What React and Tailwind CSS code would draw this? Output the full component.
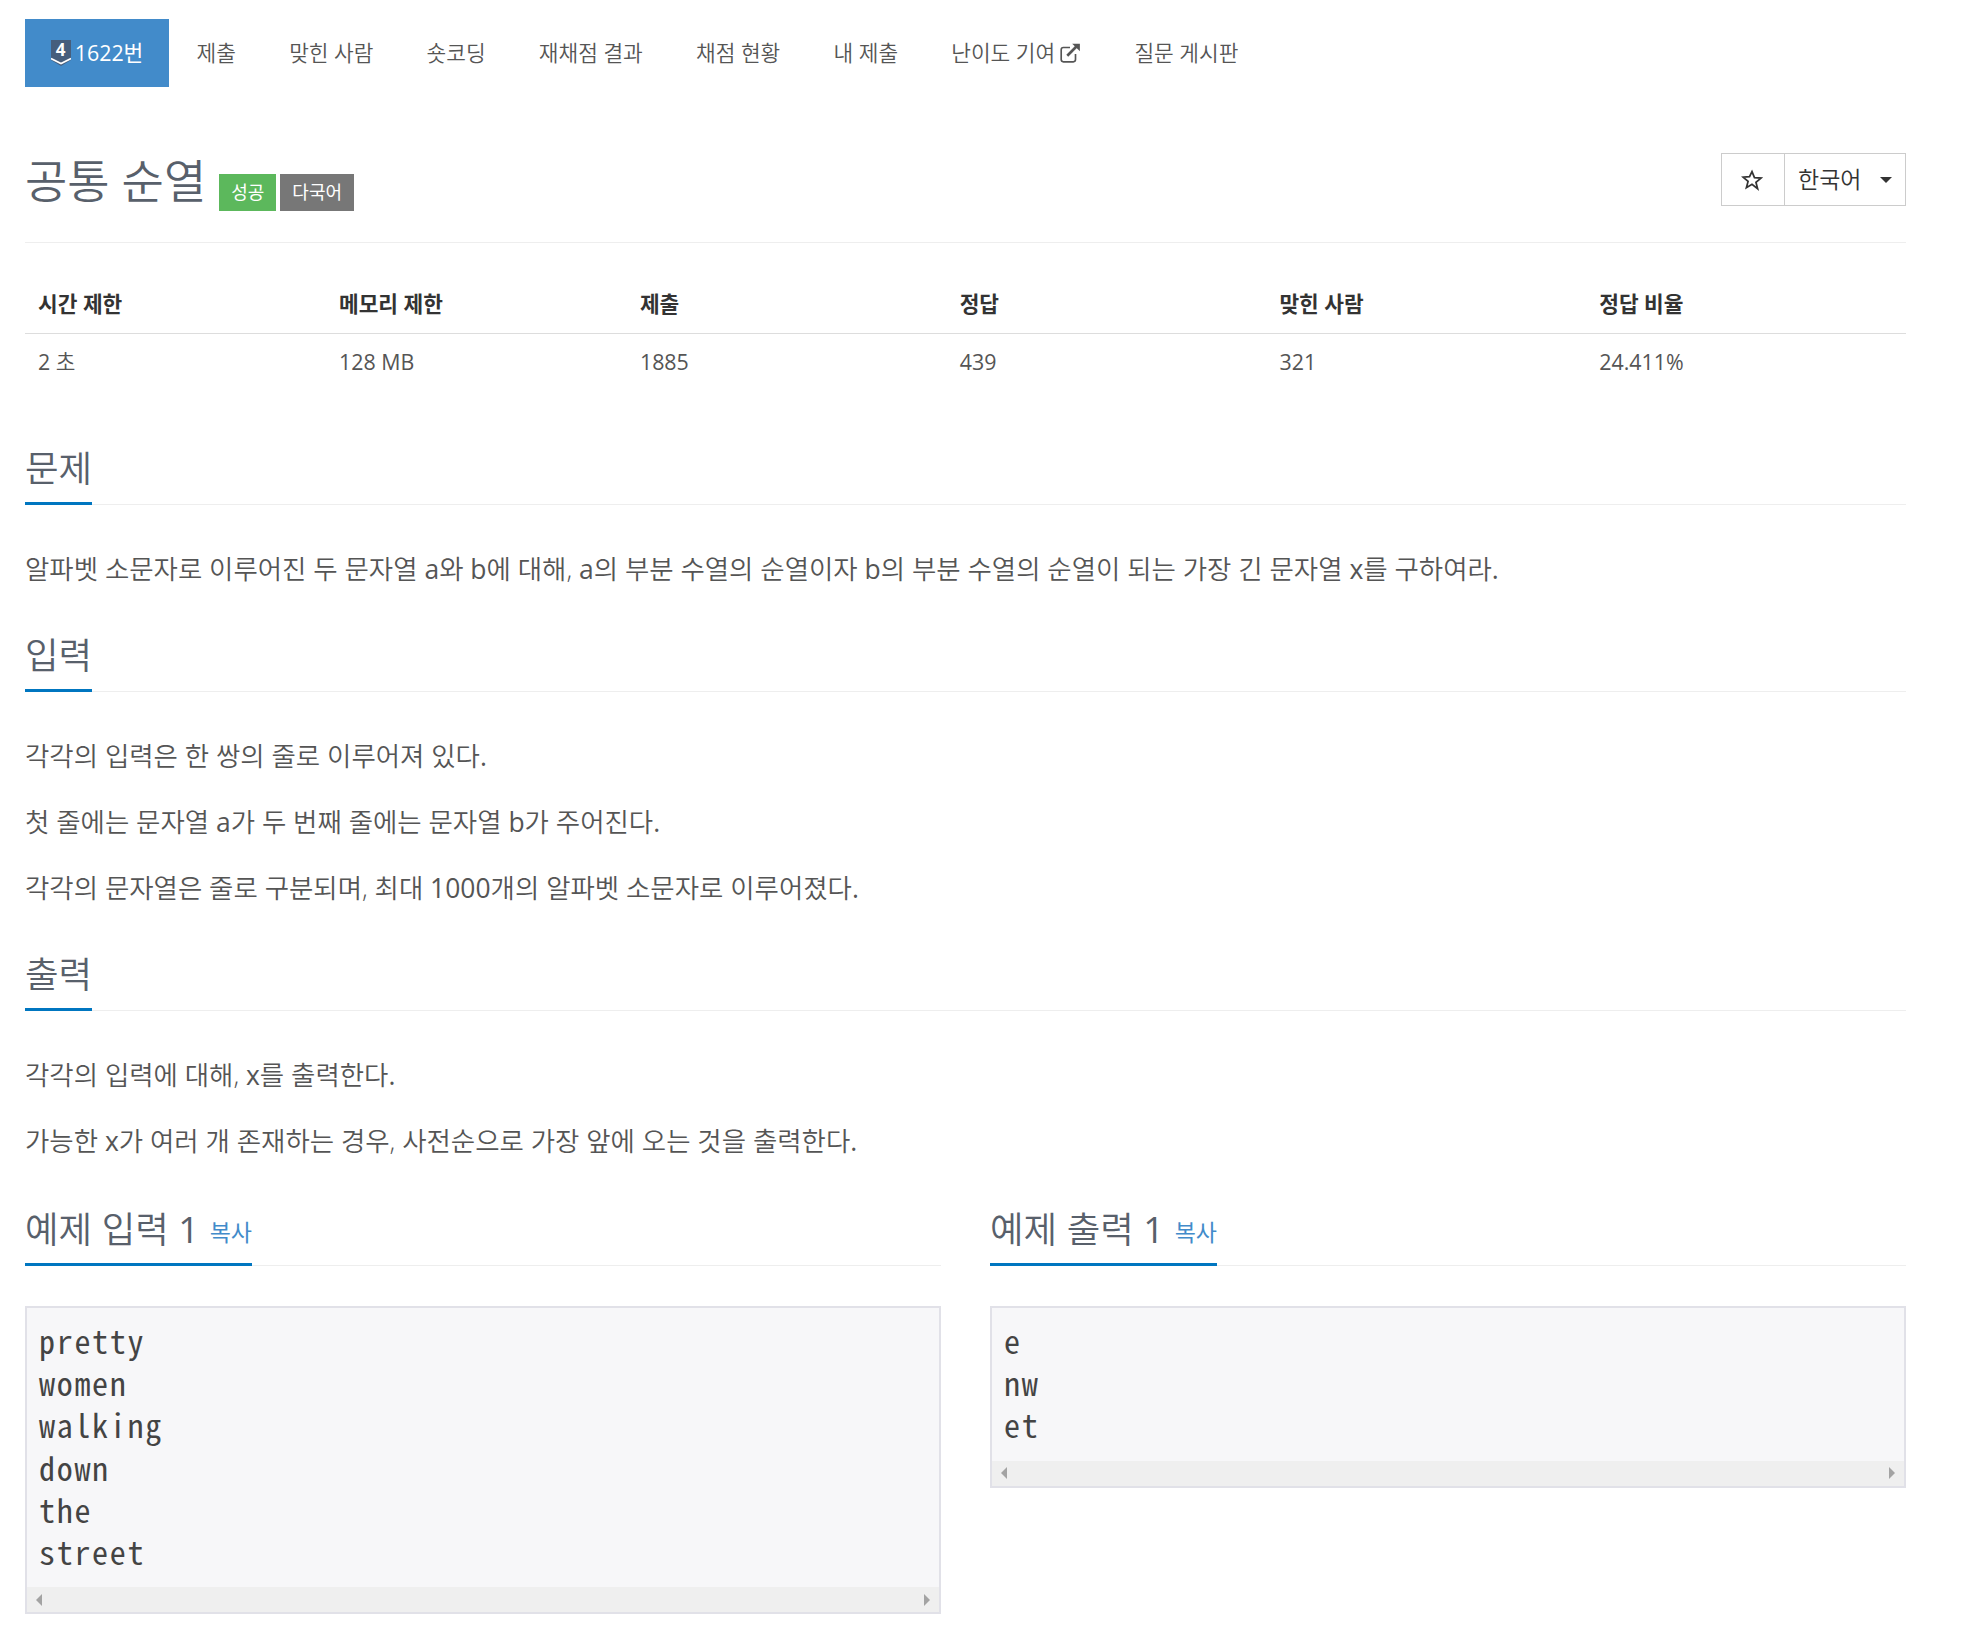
const SANS = "font-['Open_Sans','Noto_Sans_CJK_KR',sans-serif]";

// Korean sits at the DemiLight cut, Latin and digits stay regular like the reference
function Mixed({ text }) {
  return text.split(/([A-Za-z0-9.%]+)/).map((part, i) =>
    i % 2 ? (
      <span key={i} className="font-normal">
        {part}
      </span>
    ) : (
      part
    )
  );
}

function NavItem({ children }) {
  return (
    <a className="flex h-[68px] items-center px-[26.6px] text-[21.4px] font-[350] text-[#555]">
      {children}
    </a>
  );
}

function ExternalIcon() {
  return (
    <svg viewBox="0 0 20 20" className="ml-[4px] h-[22px] w-[22px]" fill="none" stroke="#555" strokeWidth="1.5">
      <path d="M15 11v5a2 2 0 0 1-2 2H4a2 2 0 0 1-2-2V7a2 2 0 0 1 2-2h6" />
      <path d="M7.5 12.5 17 3" strokeWidth="2.4" />
      <path d="M12 1.5h7v7z" fill="#555" stroke="none" />
    </svg>
  );
}

function TierBadge() {
  return (
    <span className="relative mr-[4px] h-[26px] w-[20px] shrink-0">
      <svg viewBox="0 0 20 26" className="h-[26px] w-[20px]">
        <path d="M0 0h20v20l-10 6-10-6z" fill="#465e7c" />
        <path d="M0 18.5l10 5 10-5" fill="none" stroke="#fff" strokeWidth="1.6" />
      </svg>
      <span className="absolute inset-x-0 top-0 text-center text-[17px] leading-[20px] font-bold text-white">4</span>
    </span>
  );
}

function StarIcon() {
  return (
    <svg viewBox="0 0 24 24" className="-ml-[2px] h-[22px] w-[22px]" fill="none" stroke="#333" strokeWidth="1.9">
      <path d="M12 2.8l2.7 6.6 7.1.5-5.5 4.6 1.8 6.9L12 16.6l-6.1 3.8 1.8-6.9-5.5-4.6 7.1-.5z" />
    </svg>
  );
}

function Heading({ children, className = "" }) {
  return (
    <div className={`flex border-b border-[#eee] ${className}`}>
      <h2 className="-mb-px border-b-[3px] border-[#0076c0] pb-[9px] text-[36.5px] leading-[50px] font-[350] text-[#58606b]">
        {children}
      </h2>
    </div>
  );
}

function Para({ children }) {
  return (
    <p className="h-[66px] text-[26.46px] leading-[40px] font-[350] text-[#555]">
      <Mixed text={children} />
    </p>
  );
}

function Section({ title, children }) {
  return (
    <section className="pb-[15px]">
      <Heading>{title}</Heading>
      <div className="mt-[44px]">{children}</div>
    </section>
  );
}

function Sample({ title, lines }) {
  return (
    <div className="min-w-0">
      <Heading className="mt-[2px]">
        <Mixed text={title} /> <a className="ml-[1px] align-[2px] text-[23px] leading-none font-normal text-[#428bca]">복사</a>
      </Heading>
      <div className="mt-[40px] border-2 border-[#e1e1e8] bg-[#f7f7f9]">
        <pre className="px-[12px] pt-[11px] pb-[15px] font-['Noto_Sans_Mono_CJK_KR','DejaVu_Sans_Mono',monospace] text-[32px] leading-[42.2px] tracking-[1.7px] text-[#444]">
          {lines.join("\n")}
        </pre>
        <div className="flex h-[25px] items-center justify-between bg-[#efefef] px-[9px]">
          <span className="h-0 w-0 border-y-[6px] border-r-[6px] border-y-transparent border-r-[#a3a3a3]" />
          <span className="h-0 w-0 border-y-[6px] border-l-[6px] border-y-transparent border-l-[#a3a3a3]" />
        </div>
      </div>
    </div>
  );
}

export default function App() {
  const cols = [
    ["시간 제한", "2 초", "w-[16%]"],
    ["메모리 제한", "128 MB", "w-[16%]"],
    ["제출", "1885", "w-[17%]"],
    ["정답", "439", "w-[17%]"],
    ["맞힌 사람", "321", "w-[17%]"],
    ["정답 비율", "24.411%", "w-[17%]"],
  ];

  return (
    <div className={`${SANS} w-[1931px] bg-white px-[25px] pt-[19px] pb-[30px]`}>
      <nav className="flex">
        <a className="mr-[1px] flex h-[68px] w-[144px] items-center justify-center bg-[#428bca] text-[21.4px] text-white">
          <TierBadge />
          1622번
        </a>
        <NavItem>제출</NavItem>
        <NavItem>맞힌 사람</NavItem>
        <NavItem>숏코딩</NavItem>
        <NavItem>재채점 결과</NavItem>
        <NavItem>채점 현황</NavItem>
        <NavItem>내 제출</NavItem>
        <NavItem>
          난이도 기여
          <ExternalIcon />
        </NavItem>
        <NavItem>질문 게시판</NavItem>
      </nav>

      <div className="mt-[66px] flex h-[90px] items-start justify-between border-b border-[#eee]">
        <div className="flex items-start">
          <h1 className="-mt-[3px] text-[46px] leading-[60px] font-[350] text-[#58606b]">공통 순열</h1>
          <span className="mt-[21px] ml-[13px] flex h-[37px] items-center bg-[#5cb85c] px-[12px] text-[18px] text-white">성공</span>
          <span className="mt-[21px] ml-[4px] flex h-[37px] items-center bg-[#777] px-[12px] text-[18px] text-white">다국어</span>
        </div>
        <div className="flex h-[53px] border border-[#ccc] text-[#333]">
          <span className="flex w-[63px] items-center justify-center border-r border-[#ccc]">
            <StarIcon />
          </span>
          <span className="flex w-[120px] items-center pl-[13px] text-[23px] font-[350]">
            한국어
            <span className="ml-[19px] h-0 w-0 border-x-[6px] border-t-[6px] border-x-transparent border-t-[#333]" />
          </span>
        </div>
      </div>

      <table className="mt-[39px] w-full table-fixed border-collapse">
        <thead>
          <tr className="border-b border-[#ddd]">
            {cols.map((c) => (
              <th key={c[0]} className={`${c[2]} h-[51px] px-[13px] pb-[6px] text-left text-[21.4px] font-bold text-[#333]`}>
                {c[0]}
              </th>
            ))}
          </tr>
        </thead>
        <tbody>
          <tr>
            {cols.map((c) => (
              <td key={c[0]} className="h-[58px] px-[13px] text-[21.4px] font-[350] text-[#555]">
                <Mixed text={c[1]} />
              </td>
            ))}
          </tr>
        </tbody>
      </table>

      <div className="mt-[52px]">
        <Section title="문제">
          <Para>알파벳 소문자로 이루어진 두 문자열 a와 b에 대해, a의 부분 수열의 순열이자 b의 부분 수열의 순열이 되는 가장 긴 문자열 x를 구하여라.</Para>
        </Section>
        <Section title="입력">
          <Para>각각의 입력은 한 쌍의 줄로 이루어져 있다.</Para>
          <Para>첫 줄에는 문자열 a가 두 번째 줄에는 문자열 b가 주어진다.</Para>
          <Para>각각의 문자열은 줄로 구분되며, 최대 1000개의 알파벳 소문자로 이루어졌다.</Para>
        </Section>
        <Section title="출력">
          <Para>각각의 입력에 대해, x를 출력한다.</Para>
          <Para>가능한 x가 여러 개 존재하는 경우, 사전순으로 가장 앞에 오는 것을 출력한다.</Para>
        </Section>
      </div>

      <div className="grid grid-cols-2 items-start gap-x-[49px]">
        <Sample title="예제 입력 1" lines={["pretty", "women", "walking", "down", "the", "street"]} />
        <Sample title="예제 출력 1" lines={["e", "nw", "et"]} />
      </div>
    </div>
  );
}
